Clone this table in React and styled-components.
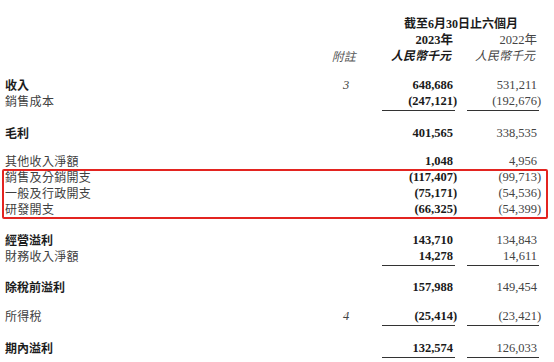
import React from "react";
import styled, { createGlobalStyle } from "styled-components";

const GlobalStyle = createGlobalStyle`
    html, body {
        margin: 0;
        padding: 0;
        background: #ffffff;
    }
    body {
        width: 554px;
        height: 362px;
        overflow: hidden;
    }
`;

const serif = `"Liberation Serif", "Noto Sans CJK TC", serif`;
const cjk = `"Noto Sans CJK TC", "Liberation Sans", sans-serif`;

const Page = styled.div`
    padding-top: 16px;
    width: 554px;
    box-sizing: border-box;
`;

const Row = styled.div`
    display: grid;
    grid-template-columns: 1fr 58px 73px 72px;
    column-gap: 12px;
    padding: 0 15px 0 5px;
    margin-top: ${(props) => props.$space || 0}px;
    line-height: 16px;
`;

const Label = styled.div`
    font-family: ${cjk};
    font-size: 12px;
    font-weight: ${(props) => (props.$bold ? 700 : 400)};
    color: ${(props) => (props.$bold ? "#1c1c1c" : "#404040")};
    letter-spacing: ${(props) => (props.$bold ? "0" : "0.3px")};
    white-space: nowrap;
`;

const Note = styled.div`
    font-family: ${serif};
    font-style: italic;
    font-size: 12.5px;
    color: #444;
    text-align: center;
    padding-left: 10px;
`;

const Cell = styled.div`
    font-family: ${serif};
    font-size: 12.5px;
    text-align: right;
    padding-right: 2px;
    white-space: nowrap;
    font-weight: ${(props) => (props.$bold ? 700 : 400)};
    color: ${(props) => (props.$bold ? "#1a1a1a" : "#444")};
    padding-bottom: ${(props) => (props.$ruled ? "2px" : "0")};
    background-image: ${(props) =>
        props.$ruled ? "linear-gradient(#333333, #333333)" : "none"};
    background-repeat: no-repeat;
    background-position: left bottom;
    background-size: 100% 1px;
`;

const Paren = styled.span`
    margin-right: -0.333em;
`;

const Title = styled.div`
    grid-column: 3 / 5;
    font-family: ${serif};
    font-size: 12px;
    font-weight: 700;
    color: #1c1c1c;
    text-align: center;
    padding-left: 1px;
    white-space: nowrap;
`;

const HeadCell = styled.div`
    grid-column: ${(props) => props.$col};
    font-family: ${serif};
    font-size: 12.5px;
    font-weight: ${(props) => (props.$bold ? 700 : 400)};
    color: ${(props) => (props.$bold ? "#1c1c1c" : "#444")};
    text-align: right;
    padding-right: 2px;
    white-space: nowrap;
`;

const Slant = styled.span`
    display: inline-block;
    font-size: 12px;
    transform: skewX(-14deg);
    margin-right: 1px;
`;

const HeadNote = styled.div`
    grid-column: 2;
    font-family: ${cjk};
    font-size: 12px;
    color: #555;
    text-align: center;
    padding-left: 10px;
`;

const Highlight = styled.div`
    position: relative;

    &::after {
        content: "";
        position: absolute;
        top: 0;
        bottom: 0;
        left: 2px;
        right: 6px;
        border: 2px solid #e32420;
        border-radius: 2px;
        pointer-events: none;
    }
`;

function Num({ value, bold, ruled }) {
    const negative = value.startsWith("(");
    return (
        <Cell $bold={bold} $ruled={ruled}>
            {negative ? (
                <>
                    {value.slice(0, -1)}
                    <Paren>)</Paren>
                </>
            ) : (
                value
            )}
        </Cell>
    );
}

function Line({ label, bold, note, cur, prev, ruled, space }) {
    return (
        <Row $space={space}>
            <Label $bold={bold}>{label}</Label>
            <Note>{note}</Note>
            <Num value={cur} bold ruled={ruled} />
            <Num value={prev} ruled={ruled} />
        </Row>
    );
}

export default function App() {
    return (
        <Page>
            <GlobalStyle />
            <Row>
                <Title>截至6月30日止六個月</Title>
            </Row>
            <Row>
                <HeadCell $col={3} $bold>
                    2023年
                </HeadCell>
                <HeadCell $col={4}>2022年</HeadCell>
            </Row>
            <Row>
                <HeadNote>
                    <Slant>附註</Slant>
                </HeadNote>
                <HeadCell $col={3} $bold>
                    <Slant>人民幣千元</Slant>
                </HeadCell>
                <HeadCell $col={4}>
                    <Slant>人民幣千元</Slant>
                </HeadCell>
            </Row>

            <Line space={13} label="收入" bold note="3" cur="648,686" prev="531,211" />
            <Line label="銷售成本" cur="(247,121)" prev="(192,676)" ruled />

            <Line space={14} label="毛利" bold cur="401,565" prev="338,535" />

            <Line space={12} label="其他收入淨額" cur="1,048" prev="4,956" />
            <Highlight>
                <Line label="銷售及分銷開支" cur="(117,407)" prev="(99,713)" />
                <Line label="一般及行政開支" cur="(75,171)" prev="(54,536)" />
                <Line label="研發開支" cur="(66,325)" prev="(54,399)" ruled />
            </Highlight>

            <Line space={13} label="經營溢利" bold cur="143,710" prev="134,843" />
            <Line label="財務收入淨額" cur="14,278" prev="14,611" ruled />

            <Line space={13} label="除稅前溢利" bold cur="157,988" prev="149,454" />

            <Line space={13} label="所得稅" note="4" cur="(25,414)" prev="(23,421)" ruled />

            <Line space={14} label="期內溢利" bold cur="132,574" prev="126,033" ruled />
        </Page>
    );
}
